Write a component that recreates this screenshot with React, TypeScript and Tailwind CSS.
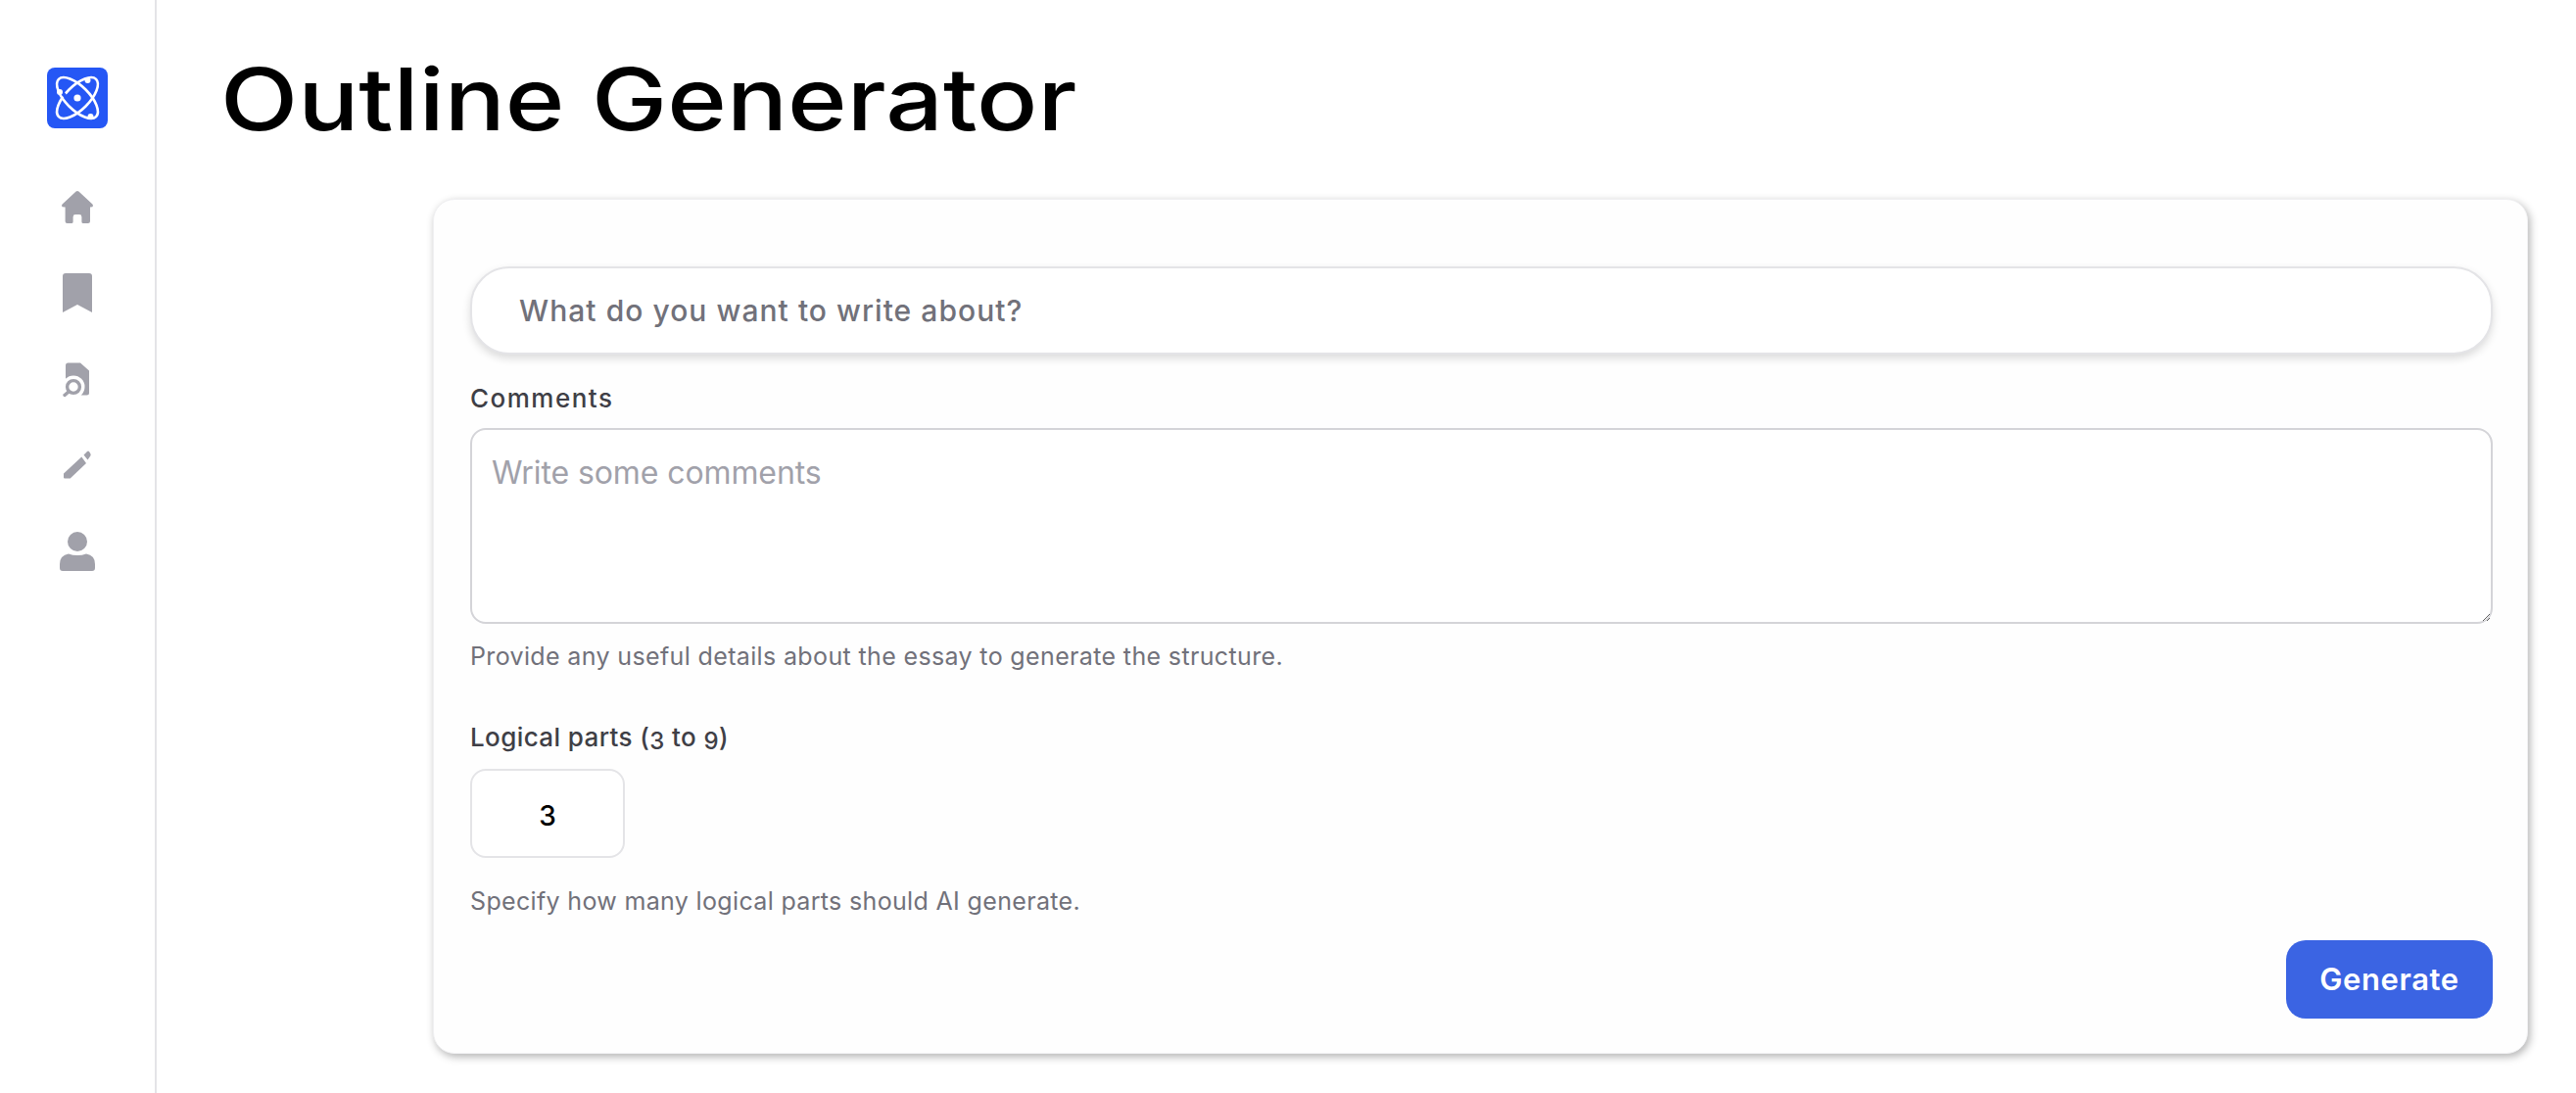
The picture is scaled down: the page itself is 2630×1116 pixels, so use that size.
import React from "react";

const gray = "#a1a1aa";

function Logo() {
  return (
    <div className="w-[62px] h-[62px] rounded-lg bg-[#2557f5] shrink-0">
      <svg width="62" height="62" viewBox="0 0 62 62" fill="none" stroke="#fff" strokeWidth="2.6">
        <ellipse cx="31" cy="31" rx="27" ry="12" transform="rotate(45 31 31)" />
        <ellipse cx="31" cy="31" rx="27" ry="12" transform="rotate(-45 31 31)" />
        <path d="M16 26 L25 37" stroke="#2557f5" strokeWidth="4" />
        <circle cx="31" cy="31" r="3.6" fill="#fff" stroke="none" />
        <circle cx="41.5" cy="13" r="3" fill="#fff" stroke="none" />
        <circle cx="13" cy="25" r="3" fill="#fff" stroke="none" />
        <circle cx="44.5" cy="50" r="3" fill="#fff" stroke="none" />
      </svg>
    </div>
  );
}

function Home() {
  return (
    <svg width="40" height="40" viewBox="0 0 40 40" fill={gray}>
      <path d="M18.6 4.6 Q20 3.6 21.4 4.6 L35.4 17.6 Q36.6 19 35.4 20.2 L33 20.4 L33 35 Q33 37 31 37 L26 37 Q24.4 37 24.4 35.4 L24.4 30.4 Q24.4 28 22 28 L18 28 Q15.6 28 15.6 30.4 L15.6 35.4 Q15.6 37 14 37 L9.6 37 Q7.6 37 7.6 35 L7.6 20.4 L4.6 20.2 Q3.4 19 4.6 17.6 Z" />
    </svg>
  );
}

function Bookmark() {
  return (
    <svg width="40" height="40" viewBox="0 0 40 40" fill={gray}>
      <path d="M8 0 L32 0 Q35 0 35 3 L35 40 L20 32 L5 40 L5 3 Q5 0 8 0 Z" />
    </svg>
  );
}

function DocSearch() {
  return (
    <svg width="40" height="40" viewBox="0 0 40 40" fill={gray}>
      <path d="M10.5 3.5 L23 3.5 L32 11.5 L32 34 Q32 36.5 29.5 36.5 L12 36.5 L8 30 L8 6 Q8 3.5 10.5 3.5 Z" />
      <circle cx="16" cy="28" r="11.5" fill="#fff" />
      <circle cx="16" cy="28" r="6.4" fill="none" stroke={gray} strokeWidth="3.4" />
      <path d="M11 33 L7 36.5" stroke={gray} strokeWidth="3.4" strokeLinecap="round" />
    </svg>
  );
}

function Pencil() {
  return (
    <svg width="40" height="40" viewBox="0 0 40 40" fill={gray}>
      <path d="M6 28.5 L24.3 11.5 L29 18 L12.7 33.5 L7 33.5 Q6 33.5 6 32.5 Z" />
      <path d="M26.5 9.5 L30 6 Q31 5.2 32 6 L33.5 8.5 Q34 10 33 11 L30.5 14.5 Z" />
    </svg>
  );
}

function Person() {
  return (
    <svg width="40" height="40" viewBox="0 0 40 40" fill={gray}>
      <ellipse cx="20" cy="10" rx="10" ry="10" />
      <path d="M11 22.5 Q15 24 20 24 Q25 24 29 22.5 Q38 24 38 33 L38 37 Q38 40 35 40 L5 40 Q2 40 2 37 L2 33 Q2 24 11 22.5 Z" />
    </svg>
  );
}

export default function App() {
  return (
    <div className="flex min-h-[1116px] bg-white font-['Inter',sans-serif]">
      <aside className="w-[160px] shrink-0 border-r-2 border-[#e4e4e7] flex flex-col items-center pt-[69px]">
        <Logo />
        <nav className="mt-[60px] flex flex-col items-center gap-[48px]">
          <Home />
          <Bookmark />
          <DocSearch />
          <Pencil />
          <Person />
        </nav>
      </aside>
      <main className="flex-1 min-w-0 pl-[65px] pr-[49px] flex flex-col">
        <h1 className="mt-[46px] h-[110px] w-fit text-[88px] leading-[110px] font-[550] text-black origin-left scale-x-[1.174] whitespace-nowrap">
          Outline Generator
        </h1>
        <section className="mt-[47px] ml-[217px] h-[873px] rounded-[22px] bg-[#fefefe] border border-[#f0f0f2] shadow-[2px_3px_8px_rgba(0,0,0,0.3)] pl-[37px] pr-[35px] pt-[68px] flex flex-col">
          <div className="h-[90px] shrink-0 rounded-[40px] border-2 border-[#e4e4e7] bg-white shadow-[0_4px_8px_rgba(0,0,0,0.14)] flex items-center pl-[48px] text-[30px] tracking-[1.05px] font-medium text-[#71717a]">
            What do you want to write about?
          </div>
          <label className="mt-[29px] text-[26px] tracking-[1.5px] leading-[32px] font-medium text-[#3f3f46]">Comments</label>
          <textarea
            placeholder="Write some comments"
            className="mt-[14px] block w-full h-[200px] shrink-0 rounded-[16px] border-2 border-[#d4d4d8] bg-white px-[20px] pt-[24px] pb-[20px] text-[32px] tracking-[-0.1px] leading-[40px] placeholder:text-[#a1a1aa] outline-none"
          />
          <p className="mt-[17px] text-[25px] tracking-[0.36px] leading-[32px] text-[#71717a]">
            Provide any useful details about the essay to generate the structure.
          </p>
          <label className="mt-[51px] h-[32px] shrink-0 text-[26px] tracking-[0.4px] leading-[32px] font-medium text-[#3f3f46]">
            Logical parts (<span className="text-[24px] leading-none align-[-3px]">3</span> to <span className="text-[24px] leading-none align-[-3px]">9</span>)
          </label>
          <div className="mt-[16px] w-[158px] h-[91px] shrink-0 rounded-[16px] border-2 border-[#e4e4e7] bg-white flex items-center justify-center pt-[4px] text-[28px] font-medium text-black">
            3
          </div>
          <p className="mt-[28px] text-[25px] tracking-[0.34px] leading-[32px] text-[#71717a]">
            Specify how many logical parts should AI generate.
          </p>
          <div className="mt-[24px] flex justify-end">
            <button className="w-[211px] h-[80px] rounded-[20px] bg-[#3b64e3] text-white text-[31px] font-semibold tracking-[0.6px]">
              Generate
            </button>
          </div>
        </section>
      </main>
    </div>
  );
}
